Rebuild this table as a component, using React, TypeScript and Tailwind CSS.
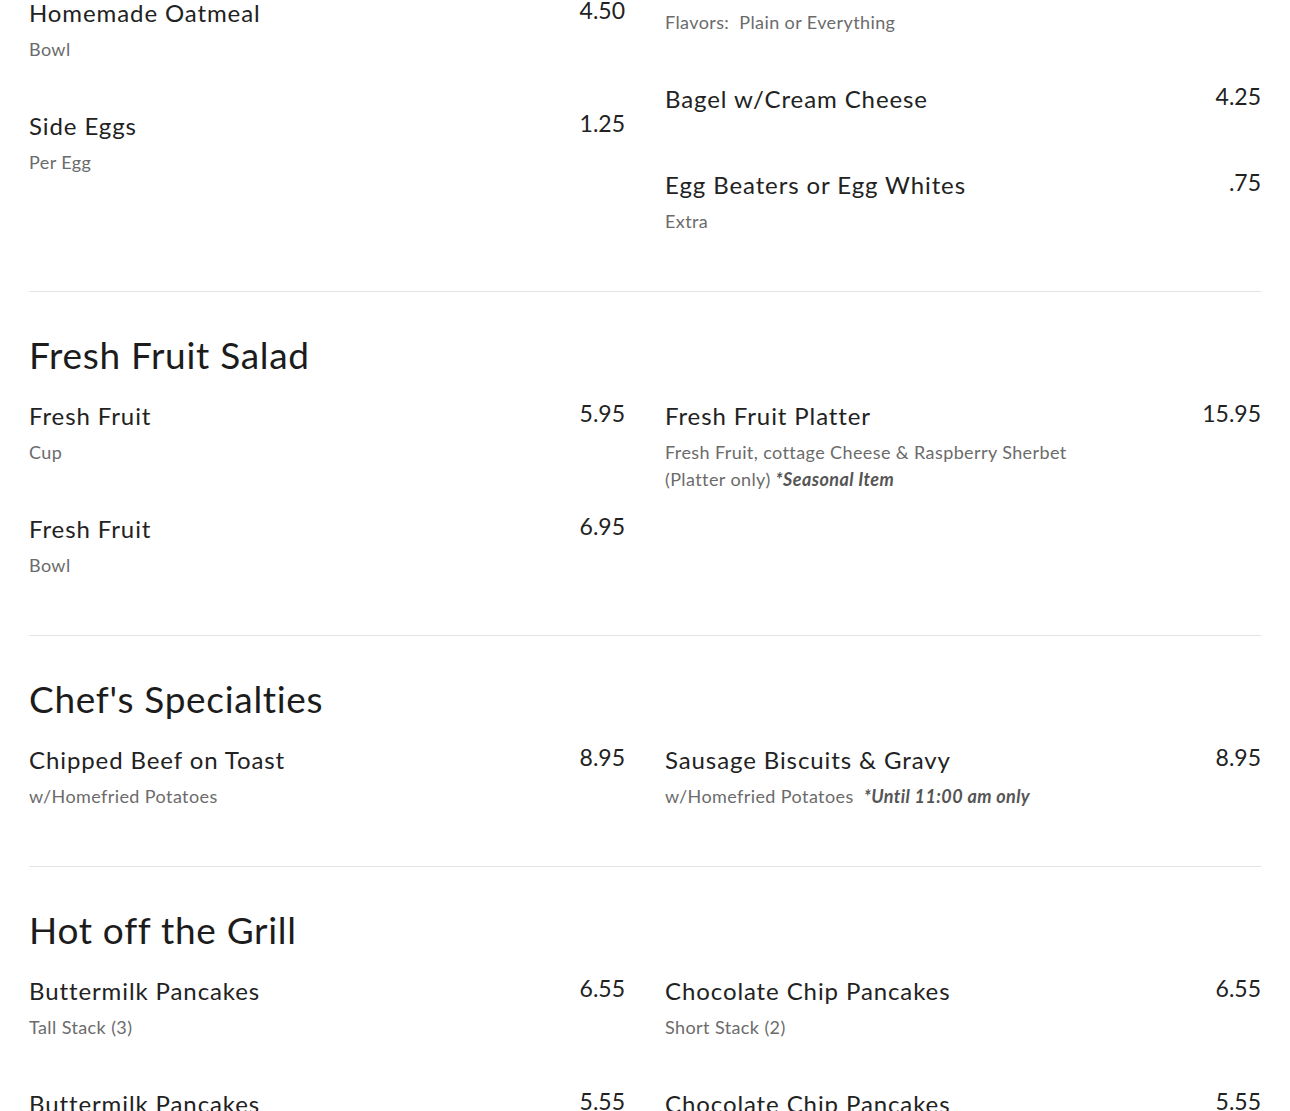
import React from 'react';

interface MenuItem {
  name: string;
  price: string;
  desc?: React.ReactNode;
}

interface MenuSection {
  title?: string;
  left: MenuItem[];
  right: MenuItem[];
  leftOffset?: boolean;
}

const sections: MenuSection[] = [
  {
    leftOffset: true,
    left: [
      { name: 'Homemade Oatmeal', price: '4.50', desc: 'Bowl' },
      { name: 'Side Eggs', price: '1.25', desc: 'Per Egg' },
    ],
    right: [
      { name: 'Toasted Bagel', price: '3.25', desc: 'Flavors:\u00a0 Plain or Everything' },
      { name: 'Bagel w/Cream Cheese', price: '4.25' },
      { name: 'Egg Beaters or Egg Whites', price: '.75', desc: 'Extra' },
    ],
  },
  {
    title: 'Fresh Fruit Salad',
    left: [
      { name: 'Fresh Fruit', price: '5.95', desc: 'Cup' },
      { name: 'Fresh Fruit', price: '6.95', desc: 'Bowl' },
    ],
    right: [
      {
        name: 'Fresh Fruit Platter',
        price: '15.95',
        desc: (
          <>
            Fresh Fruit, cottage Cheese &amp; Raspberry Sherbet
            <br />
            (Platter only) <strong className="font-bold italic text-[#555]">*Seasonal Item</strong>
          </>
        ),
      },
    ],
  },
  {
    title: "Chef's Specialties",
    left: [{ name: 'Chipped Beef on Toast', price: '8.95', desc: 'w/Homefried Potatoes' }],
    right: [
      {
        name: 'Sausage Biscuits & Gravy',
        price: '8.95',
        desc: (
          <>
            w/Homefried Potatoes&nbsp;{' '}
            <strong className="font-bold italic text-[#555]">*Until 11:00 am only</strong>
          </>
        ),
      },
    ],
  },
  {
    title: 'Hot off the Grill',
    left: [
      { name: 'Buttermilk Pancakes', price: '6.55', desc: 'Tall Stack (3)' },
      { name: 'Buttermilk Pancakes', price: '5.55', desc: 'Short Stack (2)' },
    ],
    right: [
      { name: 'Chocolate Chip Pancakes', price: '6.55', desc: 'Short Stack (2)' },
      { name: 'Chocolate Chip Pancakes', price: '5.55', desc: 'Short Stack (2)' },
    ],
  },
];

const Item = ({ item }: { item: MenuItem }) => (
  <div className={`flex justify-between items-start ${item.desc ? 'mb-[43px]' : 'mb-[46px]'}`}>
    <div>
      <h3 className="text-[24px] leading-[40px] tracking-[0.9px] text-[#222]">{item.name}</h3>
      {item.desc && (
        <p className="mt-[3px] text-[18px] leading-[27px] tracking-[0.4px] text-[#6b6b6b]">{item.desc}</p>
      )}
    </div>
    <span className="text-[23px] leading-[34px] text-[#222]">{item.price}</span>
  </div>
);

export default function App() {
  return (
    <div className="h-[1111px] overflow-hidden bg-white font-['Lato',sans-serif]">
      <div className="px-[29px] -mt-[34px]">
        {sections.map((section, i) => (
          <section key={i} className={i > 0 ? 'border-t border-[#e3e3e3] pt-[41px] pb-[13px]' : 'pb-[13px]'}>
            {section.title && (
              <h2 className="text-[37px] leading-[44px] tracking-[0.7px] text-[#1c1c1c] mb-[19px]">{section.title}</h2>
            )}
            <div className="grid grid-cols-2 gap-x-[40px] items-start">
              <div className={section.leftOffset ? 'pt-[27px]' : ''}>
                {section.left.map((item, j) => <Item key={j} item={item} />)}
              </div>
              <div>
                {section.right.map((item, j) => <Item key={j} item={item} />)}
              </div>
            </div>
          </section>
        ))}
      </div>
    </div>
  );
}
